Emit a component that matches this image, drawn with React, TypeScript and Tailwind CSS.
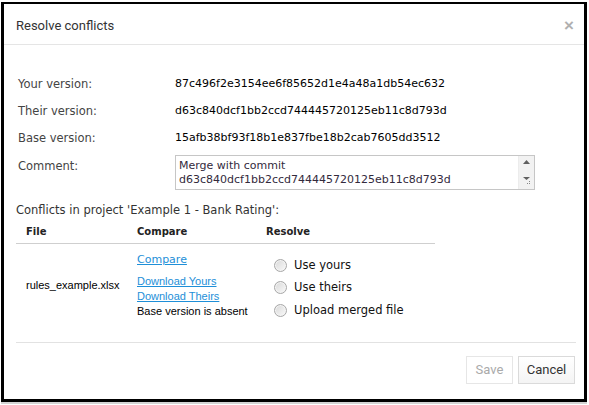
import React from 'react';

const verdana = { fontFamily: '"DejaVu Sans", Verdana, sans-serif' };
const arial = { fontFamily: '"Liberation Sans", Arial, sans-serif' };
const roboto = { fontFamily: 'Roboto, "Liberation Sans", sans-serif' };

const versions = [
  { label: 'Your version:', value: '87c496f2e3154ee6f85652d1e4a48a1db54ec632' },
  { label: 'Their version:', value: 'd63c840dcf1bb2ccd744445720125eb11c8d793d' },
  { label: 'Base version:', value: '15afb38bf93f18b1e837fbe18b2cab7605dd3512' },
];

const Radio: React.FC<{ label: string }> = ({ label }) => (
  <label className="h-[22.5px] flex items-center">
    <span className="ml-[8px] w-[13px] h-[13px] rounded-full border border-[#a7a7a7] bg-gradient-to-br from-[#d8d8d8] to-[#fafafa] shadow-[inset_0_0_0_1px_#f4f4f4]" />
    <span className="ml-[7px] text-[11.5px] text-[#111]" style={verdana}>{label}</span>
  </label>
);

export default function App() {
  return (
    <div className="w-[589px] h-[405px] bg-white pt-[2px] pl-[1px]">
      <div className="w-[586px] h-[400px] border-[3px] border-t-2 border-black flex flex-col bg-white shadow-[0_2px_0_#d4d4d4]">
        {/* header */}
        <div className="h-[41px] flex items-center justify-between pl-3 pr-[10px] pt-[3px] border-b border-[#e5e5e5]">
          <span className="text-[13px] text-[#333]" style={roboto}>Resolve conflicts</span>
          <span className="text-[17px] font-bold text-[#b0b0b0] leading-none" style={arial}>×</span>
        </div>

        {/* body */}
        <div className="flex-1 pl-3 pt-[26px]">
          {versions.map(v => (
            <div key={v.label} className="h-[27px] flex items-center pl-[2px]">
              <span className="w-[157px] text-[11.5px] text-[#444]" style={verdana}>{v.label}</span>
              <span className="text-[11px] text-black" style={verdana}>{v.value}</span>
            </div>
          ))}
          <div className="mt-[3px] flex pl-[2px]">
            <span className="w-[157px] pt-[3px] text-[11.5px] text-[#444]" style={verdana}>Comment:</span>
            <div className="w-[360px] h-[35px] border border-[#c6c6c6] flex">
              <div className="flex-1 px-[3px] pt-[3px] text-[11px] leading-[14px] text-[#332a3c]" style={verdana}>
                Merge with commit<br />d63c840dcf1bb2ccd744445720125eb11c8d793d
              </div>
              <div className="w-[16px] bg-[#f2f2f2] border-l border-[#ececec] flex flex-col items-center justify-between py-[4px]">
                <svg width="7" height="4" viewBox="0 0 7 4"><path d="M3.5 0 L7 4 L0 4 Z" fill="#606060" /></svg>
                <svg width="9" height="8" viewBox="0 0 9 8">
                  <path d="M1 0 L8 0 L4.5 3 Z" fill="#606060" />
                  <rect x="7" y="4" width="1" height="1" fill="#888" />
                  <rect x="5" y="6" width="1" height="1" fill="#888" />
                  <rect x="7" y="6" width="1" height="1" fill="#888" />
                </svg>
              </div>
            </div>
          </div>

          <div className="mt-[13px] h-[16px] flex items-center text-[11.5px] text-[#333]" style={verdana}>
            Conflicts in project 'Example 1 - Bank Rating':
          </div>

          <div className="w-[419px]">
            <div className="h-[25px] flex items-center border-b border-[#cfcfcf] text-[10px] font-bold text-[#222]" style={verdana}>
              <span className="w-[121px] pl-[10px]">File</span>
              <span className="w-[129px]">Compare</span>
              <span>Resolve</span>
            </div>
            <div className="flex h-[82px]">
              <div className="w-[121px] pl-[10px] flex items-center text-[11px] text-black" style={arial}>
                rules_example.xlsx
              </div>
              <div className="w-[129px] pt-[8px] flex flex-col">
                <a href="#" className="h-[16px] leading-[16px] text-[11px] text-[#1e8fd8] underline" style={verdana}>Compare</a>
                <a href="#" className="mt-[6px] h-[15px] leading-[15px] text-[11px] text-[#1e8fd8] underline" style={arial}>Download Yours</a>
                <a href="#" className="h-[15px] leading-[15px] text-[11px] text-[#1e8fd8] underline" style={arial}>Download Theirs</a>
                <span className="h-[15px] leading-[15px] text-[11px] text-black" style={arial}>Base version is absent</span>
              </div>
              <div className="pt-[10px] flex flex-col">
                <Radio label="Use yours" />
                <Radio label="Use theirs" />
                <Radio label="Upload merged file" />
              </div>
            </div>
          </div>
        </div>

        {/* footer */}
        <div className="ml-3 mr-2 border-t border-[#e2e2e2]" />
        <div className="h-[56px] pt-[13px] pr-[9px] flex justify-end gap-[5px]" style={roboto}>
          <button className="w-[47px] h-[28px] border border-[#e6e6e6] bg-white text-[13px] text-[#aaa]">Save</button>
          <button className="w-[57px] h-[28px] border border-[#dadada] bg-gradient-to-b from-white to-[#f4f4f4] text-[13px] text-[#333]">Cancel</button>
        </div>
      </div>
    </div>
  );
}
